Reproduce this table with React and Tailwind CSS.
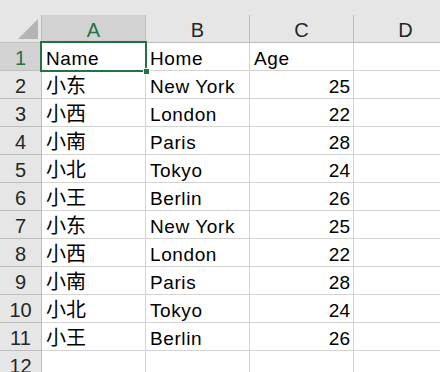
import React from 'react';

const rows = [
    ['Name', 'Home', 'Age'],
    ['小东', 'New York', 25],
    ['小西', 'London', 22],
    ['小南', 'Paris', 28],
    ['小北', 'Tokyo', 24],
    ['小王', 'Berlin', 26],
    ['小东', 'New York', 25],
    ['小西', 'London', 22],
    ['小南', 'Paris', 28],
    ['小北', 'Tokyo', 24],
    ['小王', 'Berlin', 26],
    ['', '', ''],
];

const cols = ['A', 'B', 'C', 'D'];

const cell = 'h-[28px] border-r border-b border-[#d4d4d4] flex items-center pt-[3px] px-[4px] text-[19px] tracking-[0.6px] leading-none whitespace-nowrap';

export default function App() {
    return (
        <div
            className="relative w-[440px] h-[372px] overflow-hidden bg-white text-black"
            style={{ fontFamily: '"Liberation Sans", "Noto Sans CJK SC", sans-serif' }}
        >
            {/* top strip */}
            <div className="h-[15px] bg-[#e6e6e6]" />

            <div className="grid grid-cols-[42px_104px_104px_104px_104px] w-[458px]">
                {/* column header */}
                <div className="h-[28px] bg-[#e6e6e6] border-r border-b border-[#bdbdbd] flex items-end justify-end pr-[3px] pb-[3px]">
                    <svg width="20" height="20" viewBox="0 0 20 20">
                        <polygon points="0,20 20,20 20,0" fill="#b4b4b4" />
                    </svg>
                </div>
                {cols.map((c, i) => (
                    <div
                        key={c}
                        className={`h-[28px] border-b border-r border-[#bdbdbd] flex items-center justify-center text-[20px] leading-none pt-[3px] ${i === 0 ? 'bg-[#d2d2d2] text-[#217346]' : 'bg-[#e6e6e6] text-[#262626]'}`}
                    >
                        {c}
                    </div>
                ))}

                {/* data rows */}
                {rows.map((r, k) => (
                    <React.Fragment key={k}>
                        <div
                            className={`h-[28px] border-r border-b border-[#bdbdbd] flex items-center justify-center pt-[3px] text-[20px] leading-none ${k === 0 ? 'bg-[#d2d2d2] text-[#217346]' : 'bg-[#e6e6e6] text-[#262626]'}`}
                        >
                            {k + 1}
                        </div>
                        <div className={`${cell} ${k > 0 ? 'text-[20px] tracking-normal' : ''}`}>{r[0]}</div>
                        <div className={cell}>{r[1]}</div>
                        <div className={`${cell} ${typeof r[2] === 'number' ? 'justify-end pr-[3px] tracking-normal' : ''}`}>{r[2]}</div>
                        <div className={cell} />
                    </React.Fragment>
                ))}
            </div>

            {/* active cell selection */}
            <div className="absolute left-[40px] top-[41px] w-[107px] h-[31px] border-2 border-[#217346] pointer-events-none">
                <div className="absolute right-[-5px] bottom-[-5px] w-[7px] h-[7px] bg-[#217346] border border-white" />
            </div>
        </div>
    );
}
